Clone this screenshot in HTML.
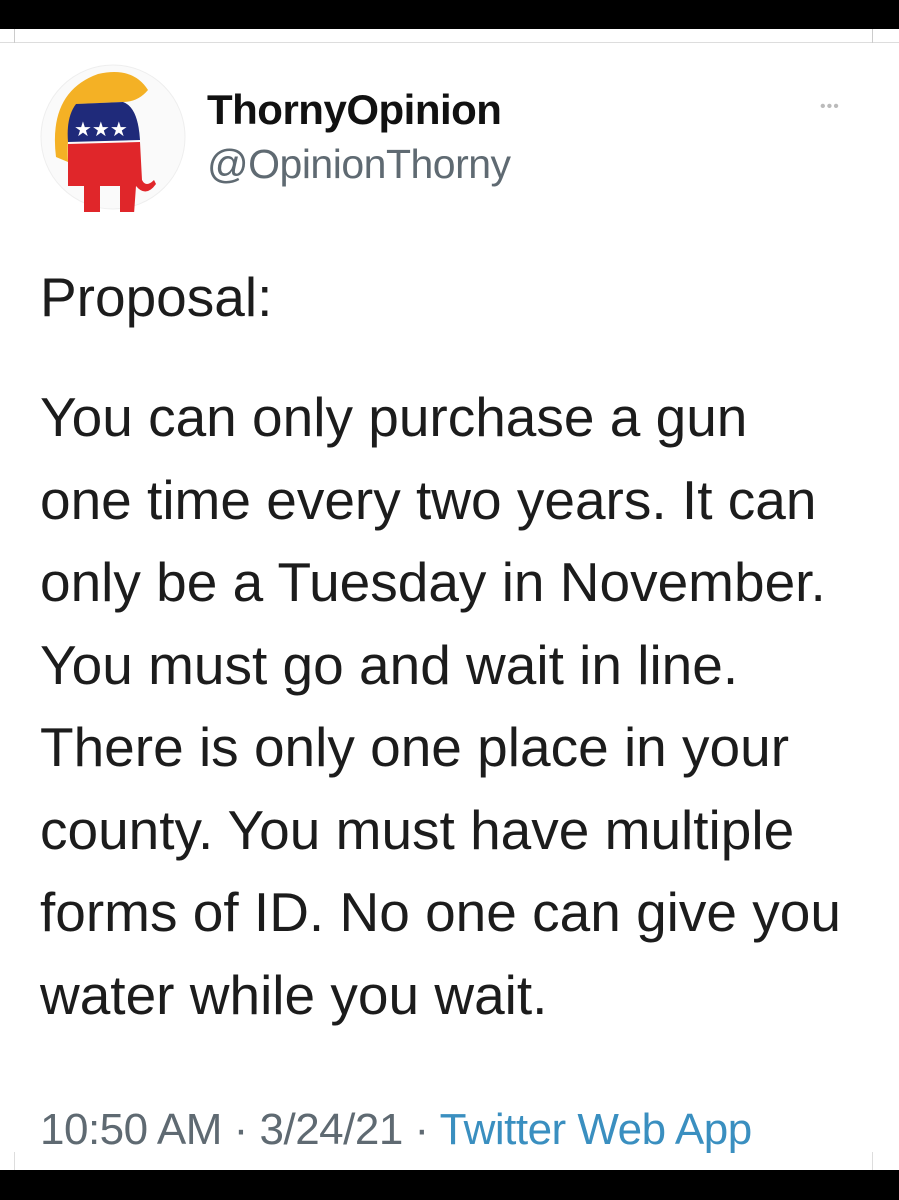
<!DOCTYPE html>
<html><head><meta charset="utf-8"><style>
body{margin:0;width:899px;height:1200px;background:#fff;position:relative;overflow:hidden;font-family:"Liberation Sans",Arial,sans-serif;}
.bar{position:absolute;left:0;width:899px;background:#000;}
.t{position:absolute;white-space:nowrap;color:#1a1a1a;}
.body{position:absolute;left:40px;top:376px;font-size:55px;line-height:82.5px;color:#1c1c1c;letter-spacing:0;}
</style></head><body>
<div class="bar" style="top:0;height:29px"></div>
<div style="position:absolute;left:0;top:42px;width:899px;height:1px;background:#ddd"></div>
<div style="position:absolute;left:14px;top:29px;width:1px;height:14px;background:#ccc"></div>
<div style="position:absolute;left:872px;top:29px;width:1px;height:14px;background:#ccc"></div>
<svg style="position:absolute;left:38px;top:62px" width="150" height="150" viewBox="0 0 150 150">
<circle cx="75" cy="75" r="72" fill="#fafafa" stroke="#eee"/>
<path d="M18 95 Q10 30 60 12 Q95 4 110 28 Q100 40 85 40 L40 42 Q28 60 30 100 Z" fill="#f4b125"/>
<path d="M38 42 L85 40 Q100 45 102 78 L30 80 Q28 55 38 42Z" fill="#1f2a7a"/>
<text x="36" y="74" fill="#fff" font-size="20" font-family="DejaVu Sans">★★★</text>
<path d="M30 82 L102 80 L104 118 Q108 126 116 118 L118 122 Q108 136 98 124 L96 152 L82 152 L82 124 L62 124 L62 152 L46 152 L46 124 L30 124 Z" fill="#e0262a"/>
</svg>
<div class="t" style="left:207px;top:86px;font-size:42px;font-weight:bold;color:#111;letter-spacing:-0.5px">ThornyOpinion</div>
<div class="t" style="left:207px;top:141px;font-size:41px;color:#5f6a72;letter-spacing:-0.5px">@OpinionThorny</div>
<div class="t" style="left:820px;top:98px;font-size:16px;color:#bbb;letter-spacing:1px">•••</div>
<div class="t" style="left:40px;top:265px;font-size:55px;color:#1c1c1c">Proposal:</div>
<div class="body">You can only purchase a gun<br>one time every two years. It can<br>only be a Tuesday in November.<br>You must go and wait in line.<br>There is only one place in your<br>county. You must have multiple<br>forms of ID. No one can give you<br>water while you wait.</div>
<div class="t" style="left:40px;top:1105px;font-size:44px;color:#5f6a72;letter-spacing:-0.5px">10:50 AM · 3/24/21 · <span style="color:#3a8fc0">Twitter Web App</span></div>
<div style="position:absolute;left:14px;top:1152px;width:1px;height:18px;background:#ddd"></div>
<div style="position:absolute;left:872px;top:1152px;width:1px;height:18px;background:#ddd"></div>
<div class="bar" style="top:1170px;height:30px"></div>
</body></html>
